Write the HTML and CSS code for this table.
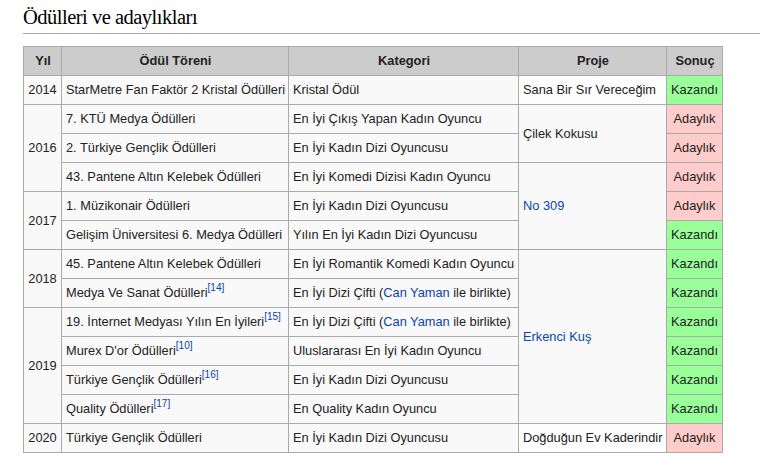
FILE: index.html
```html
<!DOCTYPE html>
<html lang="tr">
<head>
<meta charset="utf-8">
<title>Ödülleri ve adaylıkları</title>
<link rel="stylesheet" href="styles.css">
</head>
<body>
<div class="page">
  <h2 class="section-title">Ödülleri ve adaylıkları</h2>
  <table class="wikitable">
    <colgroup>
      <col class="c-year"><col class="c-award"><col class="c-cat"><col class="c-proj"><col class="c-res">
    </colgroup>
    <thead>
      <tr><th>Yıl</th><th>Ödül Töreni</th><th>Kategori</th><th>Proje</th><th>Sonuç</th></tr>
    </thead>
    <tbody>
      <tr>
        <td class="year">2014</td>
        <td>StarMetre Fan Faktör 2 Kristal Ödülleri</td>
        <td>Kristal Ödül</td>
        <td class="proj-white">Sana Bir Sır Vereceğim</td>
        <td class="win">Kazandı</td>
      </tr>
      <tr>
        <td class="year" rowspan="3">2016</td>
        <td>7. KTÜ Medya Ödülleri</td>
        <td>En İyi Çıkış Yapan Kadın Oyuncu</td>
        <td rowspan="2">Çilek Kokusu</td>
        <td class="nom">Adaylık</td>
      </tr>
      <tr>
        <td>2. Türkiye Gençlik Ödülleri</td>
        <td>En İyi Kadın Dizi Oyuncusu</td>
        <td class="nom">Adaylık</td>
      </tr>
      <tr>
        <td>43. Pantene Altın Kelebek Ödülleri</td>
        <td>En İyi Komedi Dizisi Kadın Oyuncu</td>
        <td rowspan="3"><a href="#">No 309</a></td>
        <td class="nom">Adaylık</td>
      </tr>
      <tr>
        <td class="year" rowspan="2">2017</td>
        <td>1. Müzikonair Ödülleri</td>
        <td>En İyi Kadın Dizi Oyuncusu</td>
        <td class="nom">Adaylık</td>
      </tr>
      <tr>
        <td>Gelişim Üniversitesi 6. Medya Ödülleri</td>
        <td>Yılın En İyi Kadın Dizi Oyuncusu</td>
        <td class="win">Kazandı</td>
      </tr>
      <tr>
        <td class="year" rowspan="2">2018</td>
        <td>45. Pantene Altın Kelebek Ödülleri</td>
        <td>En İyi Romantik Komedi Kadın Oyuncu</td>
        <td rowspan="6"><a href="#">Erkenci Kuş</a></td>
        <td class="win">Kazandı</td>
      </tr>
      <tr>
        <td>Medya Ve Sanat Ödülleri<sup><a href="#">[14]</a></sup></td>
        <td>En İyi Dizi Çifti (<a href="#">Can Yaman</a> ile birlikte)</td>
        <td class="win">Kazandı</td>
      </tr>
      <tr>
        <td class="year" rowspan="4">2019</td>
        <td>19. İnternet Medyası Yılın En İyileri<sup><a href="#">[15]</a></sup></td>
        <td>En İyi Dizi Çifti (<a href="#">Can Yaman</a> ile birlikte)</td>
        <td class="win">Kazandı</td>
      </tr>
      <tr>
        <td>Murex D'or Ödülleri<sup><a href="#">[10]</a></sup></td>
        <td>Uluslararası En İyi Kadın Oyuncu</td>
        <td class="win">Kazandı</td>
      </tr>
      <tr>
        <td>Türkiye Gençlik Ödülleri<sup><a href="#">[16]</a></sup></td>
        <td>En İyi Kadın Dizi Oyuncusu</td>
        <td class="win">Kazandı</td>
      </tr>
      <tr>
        <td>Quality Ödülleri<sup><a href="#">[17]</a></sup></td>
        <td>En Quality Kadın Oyuncu</td>
        <td class="win">Kazandı</td>
      </tr>
      <tr>
        <td class="year">2020</td>
        <td>Türkiye Gençlik Ödülleri</td>
        <td>En İyi Kadın Dizi Oyuncusu</td>
        <td class="proj-white">Doğduğun Ev Kaderindir</td>
        <td class="nom">Adaylık</td>
      </tr>
    </tbody>
  </table>
</div>
</body>
</html>
```
FILE: styles.css
```css
html, body {
  margin: 0;
  padding: 0;
  background: #ffffff;
}

.page {
  padding: 5px 20px 0 23px;
  font-family: "Liberation Sans", Arial, sans-serif;
  color: #222222;
}

h2.section-title {
  margin: 0 0 12px 0;
  padding: 0 0 3px 0;
  font-family: "Liberation Serif", "Times New Roman", serif;
  font-weight: normal;
  font-size: 20.5px;
  letter-spacing: -0.5px;
  line-height: 25px;
  color: #000000;
  border-bottom: 1px solid #a2a9b1;
}

.wikitable {
  border-collapse: collapse;
  border: 1px solid #aaaaaa;
  background: #f9f9f9;
  font-size: 12.8px;
  table-layout: fixed;
  width: 699px;
}

.c-year { width: 38px; }
.c-award { width: 227px; }
.c-cat { width: 230px; }
.c-proj { width: 148px; }
.c-res { width: 56px; }

.wikitable th,
.wikitable td {
  border: 1px solid #aaaaaa;
  padding: 4px 3px 4px 4px;
  line-height: 20px;
  white-space: nowrap;
  vertical-align: middle;
  text-align: left;
  overflow: visible;
}

.wikitable th {
  background: #cccccc;
  font-weight: bold;
  text-align: center;
  color: #222222;
}

.wikitable td.year {
  text-align: center;
  padding: 4px 2px;
}

.wikitable td.win {
  background: #99ff99;
  text-align: center;
  padding: 4px 1px;
}

.wikitable td.nom {
  background: #ffcccc;
  text-align: center;
  padding: 4px 1px;
}

.wikitable td.proj-white {
  background: #fdfdfd;
}

.wikitable a {
  color: #0645ad;
  text-decoration: none;
}

.wikitable sup {
  font-size: 10px;
  line-height: 1;
  vertical-align: 6px;
}
```
